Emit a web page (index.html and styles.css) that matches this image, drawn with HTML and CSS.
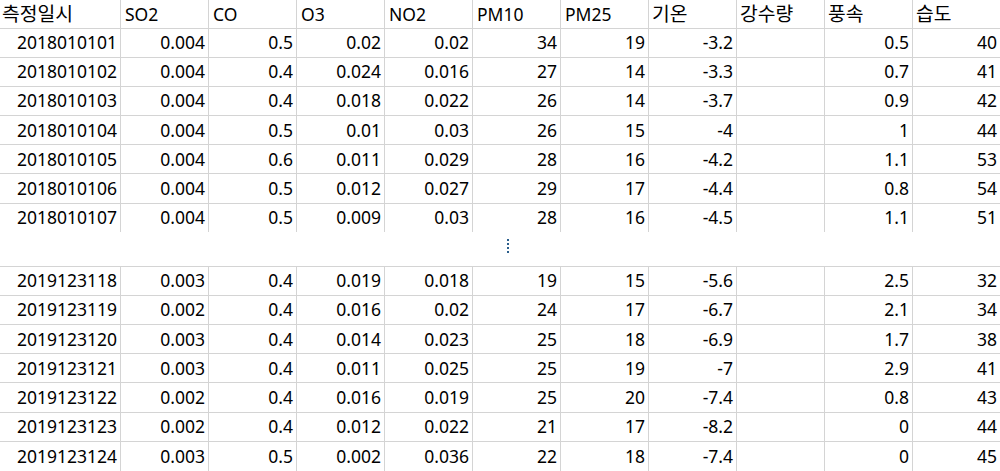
FILE: index.html
```html
<!DOCTYPE html>
<html lang="ko">
<head>
<meta charset="utf-8">
<title>측정 데이터</title>
<link rel="stylesheet" href="styles.css">
</head>
<body>
<div class="sheet">
  <div class="row head">
    <div class="c ko">측정일시</div><div class="c">SO2</div><div class="c">CO</div><div class="c">O3</div><div class="c">NO2</div><div class="c">PM10</div><div class="c">PM25</div><div class="c ko">기온</div><div class="c ko">강수량</div><div class="c ko">풍속</div><div class="c ko">습도</div>
  </div>
  <div class="row"><div class="c">2018010101</div><div class="c">0.004</div><div class="c">0.5</div><div class="c">0.02</div><div class="c">0.02</div><div class="c">34</div><div class="c">19</div><div class="c">-3.2</div><div class="c"></div><div class="c">0.5</div><div class="c">40</div></div>
  <div class="row"><div class="c">2018010102</div><div class="c">0.004</div><div class="c">0.4</div><div class="c">0.024</div><div class="c">0.016</div><div class="c">27</div><div class="c">14</div><div class="c">-3.3</div><div class="c"></div><div class="c">0.7</div><div class="c">41</div></div>
  <div class="row"><div class="c">2018010103</div><div class="c">0.004</div><div class="c">0.4</div><div class="c">0.018</div><div class="c">0.022</div><div class="c">26</div><div class="c">14</div><div class="c">-3.7</div><div class="c"></div><div class="c">0.9</div><div class="c">42</div></div>
  <div class="row"><div class="c">2018010104</div><div class="c">0.004</div><div class="c">0.5</div><div class="c">0.01</div><div class="c">0.03</div><div class="c">26</div><div class="c">15</div><div class="c">-4</div><div class="c"></div><div class="c">1</div><div class="c">44</div></div>
  <div class="row"><div class="c">2018010105</div><div class="c">0.004</div><div class="c">0.6</div><div class="c">0.011</div><div class="c">0.029</div><div class="c">28</div><div class="c">16</div><div class="c">-4.2</div><div class="c"></div><div class="c">1.1</div><div class="c">53</div></div>
  <div class="row"><div class="c">2018010106</div><div class="c">0.004</div><div class="c">0.5</div><div class="c">0.012</div><div class="c">0.027</div><div class="c">29</div><div class="c">17</div><div class="c">-4.4</div><div class="c"></div><div class="c">0.8</div><div class="c">54</div></div>
  <div class="row open"><div class="c">2018010107</div><div class="c">0.004</div><div class="c">0.5</div><div class="c">0.009</div><div class="c">0.03</div><div class="c">28</div><div class="c">16</div><div class="c">-4.5</div><div class="c"></div><div class="c">1.1</div><div class="c">51</div></div>
  <div class="gap"><span class="dots"><i></i><i></i><i></i><i></i></span></div>
  <div class="row"><div class="c">2019123118</div><div class="c">0.003</div><div class="c">0.4</div><div class="c">0.019</div><div class="c">0.018</div><div class="c">19</div><div class="c">15</div><div class="c">-5.6</div><div class="c"></div><div class="c">2.5</div><div class="c">32</div></div>
  <div class="row"><div class="c">2019123119</div><div class="c">0.002</div><div class="c">0.4</div><div class="c">0.016</div><div class="c">0.02</div><div class="c">24</div><div class="c">17</div><div class="c">-6.7</div><div class="c"></div><div class="c">2.1</div><div class="c">34</div></div>
  <div class="row"><div class="c">2019123120</div><div class="c">0.003</div><div class="c">0.4</div><div class="c">0.014</div><div class="c">0.023</div><div class="c">25</div><div class="c">18</div><div class="c">-6.9</div><div class="c"></div><div class="c">1.7</div><div class="c">38</div></div>
  <div class="row"><div class="c">2019123121</div><div class="c">0.003</div><div class="c">0.4</div><div class="c">0.011</div><div class="c">0.025</div><div class="c">25</div><div class="c">19</div><div class="c">-7</div><div class="c"></div><div class="c">2.9</div><div class="c">41</div></div>
  <div class="row"><div class="c">2019123122</div><div class="c">0.002</div><div class="c">0.4</div><div class="c">0.016</div><div class="c">0.019</div><div class="c">25</div><div class="c">20</div><div class="c">-7.4</div><div class="c"></div><div class="c">0.8</div><div class="c">43</div></div>
  <div class="row"><div class="c">2019123123</div><div class="c">0.002</div><div class="c">0.4</div><div class="c">0.012</div><div class="c">0.022</div><div class="c">21</div><div class="c">17</div><div class="c">-8.2</div><div class="c"></div><div class="c">0</div><div class="c">44</div></div>
  <div class="row last"><div class="c">2019123124</div><div class="c">0.003</div><div class="c">0.5</div><div class="c">0.002</div><div class="c">0.036</div><div class="c">22</div><div class="c">18</div><div class="c">-7.4</div><div class="c"></div><div class="c">0</div><div class="c">45</div></div>
</div>
</body>
</html>
```

FILE: styles.css
```css
* { box-sizing: border-box; }
html, body {
  margin: 0;
  padding: 0;
  background: #ffffff;
  overflow: hidden;
}
.sheet {
  width: 1000px;
  display: flex;
  flex-direction: column;
  font-family: "Noto Sans", "Noto Sans CJK KR", sans-serif;
  font-size: 17.5px;
  color: #000000;
}
.row {
  display: grid;
  grid-template-columns: 121px repeat(9, 88px) 87px;
  height: 29.1px;
}
.c {
  display: flex;
  align-items: center;
  justify-content: flex-end;
  padding: 0 3px 0 4px;
  border-right: 1px solid #d4d4d4;
  border-bottom: 1px solid #d4d4d4;
  white-space: nowrap;
  line-height: 1;
}
.c:last-child { border-right: none; }
.head { height: 29px; }
.head .c {
  justify-content: flex-start;
  padding-left: 4px;
  padding-top: 1px;
}
.head .ko {
  font-family: "Noto Sans CJK KR", sans-serif;
  font-size: 19.3px;
  padding-top: 0;
  padding-left: 3px;
}
.head .c:first-child { padding-left: 2px; }
.open { height: 28px; }
.open .c { border-bottom: none; }
.last { height: 30px; }
.last .c { border-bottom: none; }
.gap {
  height: 35.5px;
  border-bottom: 1px solid #d4d4d4;
  padding-left: 507px;
  padding-top: 7px;
}
.dots {
  display: flex;
  flex-direction: column;
  gap: 2px;
  width: 2px;
}
.dots i {
  display: block;
  width: 2px;
  height: 2px;
  background: #2b5e8c;
}
```
